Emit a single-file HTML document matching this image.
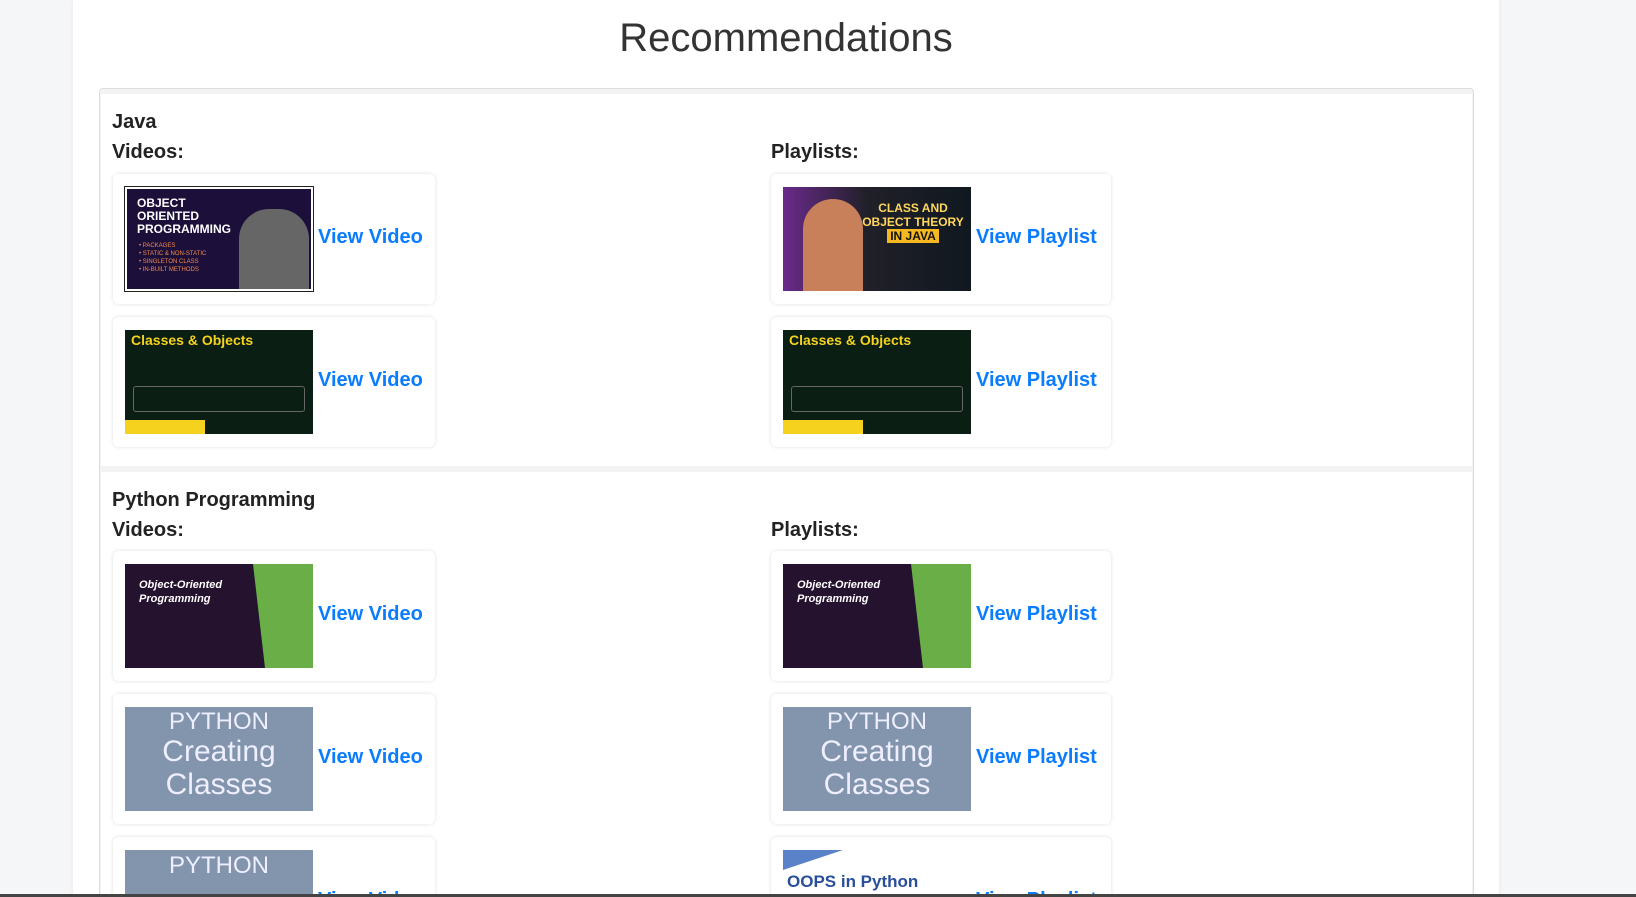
<!DOCTYPE html>
<html><head><meta charset="utf-8"><style>
*{box-sizing:border-box;margin:0;padding:0}
html{width:1636px;height:897px;overflow:hidden}
body{width:1636px;height:897px;overflow:hidden;background:#f5f6f8;font-family:"Liberation Sans",Arial,sans-serif;position:relative}
.wrap{position:absolute;left:0;top:0;width:1636px;height:897px;overflow:hidden}
.page{position:absolute;left:73px;top:0;width:1426px;height:897px;background:#fff;box-shadow:0 0 4px rgba(0,0,0,.06)}
h1{position:absolute;left:73px;width:1426px;top:16px;text-align:center;font-weight:400;font-size:40px;color:#333}
.outer{position:absolute;left:99px;top:88px;width:1375px;height:809px;border:1px solid #ddd;border-bottom:none;border-radius:4px 4px 0 0;background:#f3f3f3}
.sec{position:absolute;left:101px;width:1371px;background:#fff}
.t{position:absolute;font-weight:bold;font-size:20px;color:#222}
.card{position:absolute;width:322px;height:130px;background:#fff;border-radius:6px;box-shadow:0 0 4px rgba(0,0,0,.12);overflow:hidden}
.pl{width:340px}
.th{position:absolute;left:12px;top:13px;width:188px;height:104px;overflow:hidden}
.lk{position:absolute;left:205px;top:52px;font-weight:bold;font-size:20px;color:#0a7cff}
.bar{position:absolute;left:0;top:894px;width:1636px;height:3px;background:#444}
</style></head><body><div class="wrap">
<div class="page"></div>
<h1>Recommendations</h1>
<div class="outer"></div>
<div class="sec" style="top:94px;height:372px"></div>
<div class="sec" style="top:472px;height:425px"></div>

<div class="t" style="left:112px;top:111px">Java</div>
<div class="t" style="left:112px;top:141px">Videos:</div>
<div class="t" style="left:771px;top:141px">Playlists:</div>
<div class="t" style="left:112px;top:489px">Python Programming</div>
<div class="t" style="left:112px;top:519px">Videos:</div>
<div class="t" style="left:771px;top:519px">Playlists:</div>

<div class="card" style="left:113px;top:174px"><div class="th" style="background:#1c0f3a;border:2px solid #fff;outline:1px solid #222"><div style="color:#fff;font-weight:bold;font-size:12px;padding:8px 0 0 10px;line-height:13px">OBJECT<br>ORIENTED<br>PROGRAMMING</div><div style="color:#f58a4a;font-size:6px;padding:6px 0 0 12px;line-height:8px">• PACKAGES<br>• STATIC &amp; NON-STATIC<br>• SINGLETON CLASS<br>• IN-BUILT METHODS</div><div style="position:absolute;right:2px;top:20px;width:70px;height:84px;background:#666;border-radius:30px 30px 0 0"></div></div><div class="lk">View Video</div></div>
<div class="card" style="left:113px;top:317px"><div class="th" style="background:#0a1e14"><div style="color:#f5d21e;font-weight:bold;font-size:14px;padding:2px 0 0 6px">Classes &amp; Objects</div><div style="position:absolute;left:8px;top:56px;width:172px;height:26px;border:1px solid #666;border-radius:3px"></div><div style="position:absolute;left:0;bottom:0;width:80px;height:14px;background:#f5d21e"></div></div><div class="lk">View Video</div></div>
<div class="card pl" style="left:771px;top:174px"><div class="th" style="background:linear-gradient(90deg,#6a2a8a,#202028 45%,#101820)"><div style="position:absolute;left:20px;top:12px;width:60px;height:92px;background:#c7805a;border-radius:30px 30px 0 0"></div><div style="position:absolute;left:72px;top:14px;color:#ffd75a;font-weight:bold;font-size:12px;text-align:center;line-height:14px;width:116px">CLASS AND<br>OBJECT THEORY<br><span style="background:#f5b820;color:#111;padding:0 3px">IN JAVA</span></div></div><div class="lk">View Playlist</div></div>
<div class="card pl" style="left:771px;top:317px"><div class="th" style="background:#0a1e14"><div style="color:#f5d21e;font-weight:bold;font-size:14px;padding:2px 0 0 6px">Classes &amp; Objects</div><div style="position:absolute;left:8px;top:56px;width:172px;height:26px;border:1px solid #666;border-radius:3px"></div><div style="position:absolute;left:0;bottom:0;width:80px;height:14px;background:#f5d21e"></div></div><div class="lk">View Playlist</div></div>

<div class="card" style="left:113px;top:551px"><div class="th" style="background:#24122e"><div style="position:absolute;right:0;top:0;width:60px;height:104px;background:#6aae47;clip-path:polygon(0 0,100% 0,100% 100%,20% 100%)"></div><div style="color:#fff;font-style:italic;font-weight:bold;font-size:11px;padding:14px 0 0 14px;line-height:14px">Object-Oriented<br>Programming</div></div><div class="lk">View Video</div></div>
<div class="card" style="left:113px;top:694px"><div class="th" style="background:#8295ad;color:#eef;text-align:center"><div style="font-size:24px;padding-top:2px;line-height:26px">PYTHON</div><div style="font-size:30px;line-height:33px">Creating<br>Classes</div></div><div class="lk">View Video</div></div>
<div class="card" style="left:113px;top:837px;height:60px;border-radius:6px 6px 0 0"><div class="th" style="background:#8295ad;color:#eef;text-align:center;height:47px"><div style="font-size:24px;padding-top:2px">PYTHON</div></div><div class="lk">View Video</div></div>

<div class="card pl" style="left:771px;top:551px"><div class="th" style="background:#24122e"><div style="position:absolute;right:0;top:0;width:60px;height:104px;background:#6aae47;clip-path:polygon(0 0,100% 0,100% 100%,20% 100%)"></div><div style="color:#fff;font-style:italic;font-weight:bold;font-size:11px;padding:14px 0 0 14px;line-height:14px">Object-Oriented<br>Programming</div></div><div class="lk">View Playlist</div></div>
<div class="card pl" style="left:771px;top:694px"><div class="th" style="background:#8295ad;color:#eef;text-align:center"><div style="font-size:24px;padding-top:2px;line-height:26px">PYTHON</div><div style="font-size:30px;line-height:33px">Creating<br>Classes</div></div><div class="lk">View Playlist</div></div>
<div class="card pl" style="left:771px;top:837px;height:60px;border-radius:6px 6px 0 0"><div class="th" style="background:#fff;height:47px"><div style="position:absolute;left:0;top:0;width:60px;height:20px;background:#5a82c8;clip-path:polygon(0 0,100% 0,0 100%)"></div><div style="position:absolute;left:4px;top:22px;color:#2a4f9a;font-weight:bold;font-size:17px">OOPS in Python</div></div><div class="lk">View Playlist</div></div>

<div class="bar"></div>
</div></body></html>
